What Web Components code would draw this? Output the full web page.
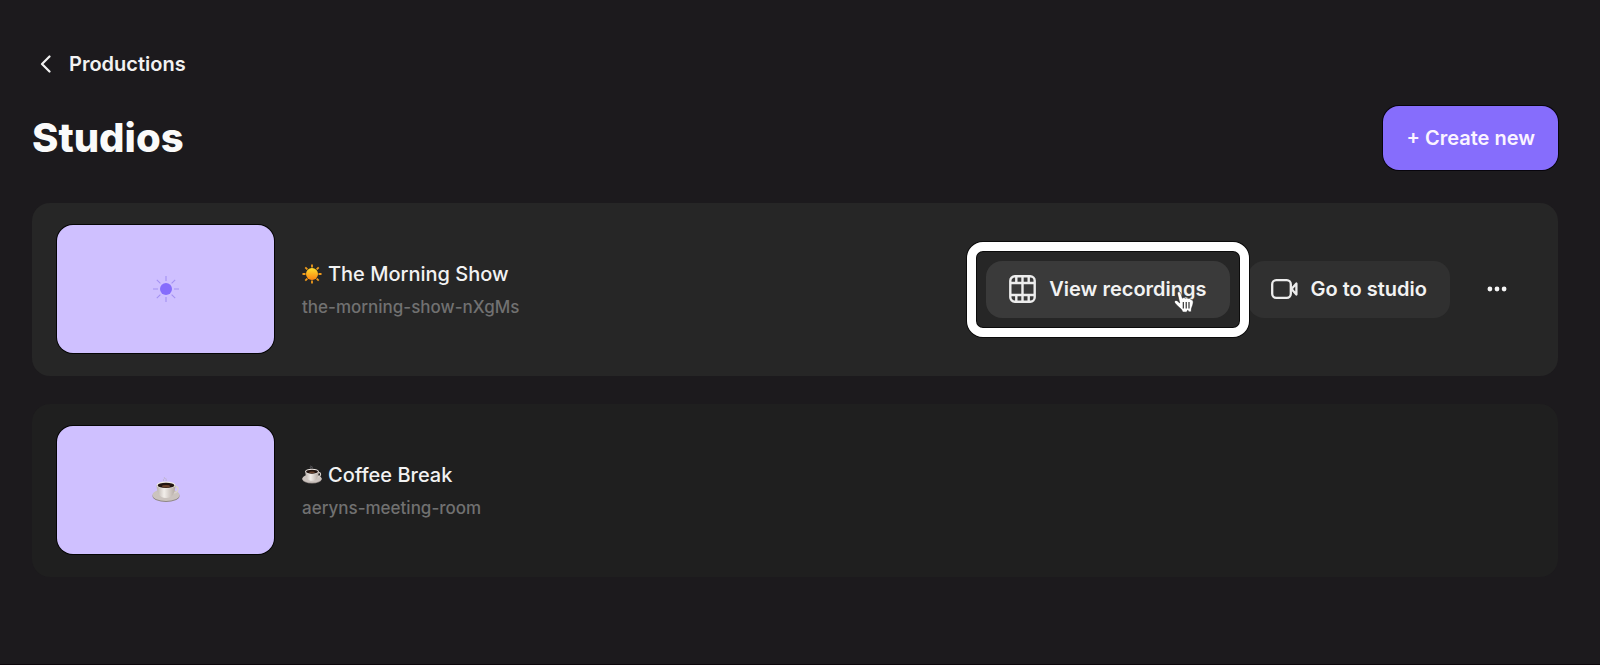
<!DOCTYPE html>
<html lang="en">
<head>
<meta charset="utf-8">
<meta name="viewport" content="width=device-width, initial-scale=1">
<title>Studios</title>
<style>
  html { background: #1c1a1d; }
  body { margin: 0; font-family: Inter, "Liberation Sans", sans-serif; font-size: 20px; line-height: 24px; color: #f2f2f2; min-height: 100vh; box-sizing: border-box; border-bottom: 1px solid #0c060b; }
</style>
</head>
<body>
<studio-page></studio-page>
<script>
const icons = {
  back: `<svg width="11" height="18" viewBox="0 0 11 18"><path d="M9.500 1.500 2 9l7.500 7.500" fill="none" stroke="#f2f2f2" stroke-width="2.200" stroke-linecap="round" stroke-linejoin="round"/></svg>`,
  film: `<svg width="27" height="28" viewBox="0 0 27 28"><g fill="none" stroke="#ededed" stroke-width="2.400"><rect x="1.300" y="1.300" width="24.400" height="25.400" rx="4.500"/><path d="M1.500 8h24M1.500 20h24M13.500 8v12"/><path d="M7.300 1.500V8M13.500 1.500V8M19.700 1.500V8M7.300 20v6.500M13.500 20v6.500M19.700 20v6.500"/></g></svg>`,
  video: `<svg width="27" height="20" viewBox="0 0 27 20"><g fill="none" stroke="#ededed" stroke-width="2.300" stroke-linejoin="round"><rect x="1.200" y="1.200" width="18.600" height="17.600" rx="4"/><path d="M20.500 9.900 25.400 4.500v11z"/></g></svg>`,
  dots: `<svg width="20" height="6" viewBox="0 0 20 6" fill="#f5f5f5"><circle cx="2.900" cy="3" r="2.400"/><circle cx="10" cy="3" r="2.400"/><circle cx="17.100" cy="3" r="2.400"/></svg>`,
  hand: `<svg width="20" height="22" viewBox="0 0 20 22"><path d="M4.300.8C5.600.3 6.400 1.200 6.800 2.300L8.500 7.200C9 6.400 10.600 6.300 11.200 7.300 12 6.500 13.500 6.600 14 7.700 15 7 16.600 7.500 17.200 8.700 19.400 8.600 19.500 10.800 19 13c-.5 2.600-1.800 3.600-1.700 7.800l-2.300.1-1.200-1.600-1.300 1.900-4-.1C8.300 17.500 2.700 15.500.5 11.300c-.4-1.800 1.600-2.500 3-1.300l2.200 1.900L3.500 3.100C3.200 2 3.400 1.200 4.300.8z" fill="#fff" stroke="#222" stroke-width=".6"/><path d="M9.300 11v6.500M12.200 11v6.500M15 11v6.500" fill="none" stroke="#222" stroke-width="1.100"/></svg>`,
  sunFlat: `<svg width="28" height="28" viewBox="0 0 28 28"><circle cx="14" cy="14" r="6" fill="#866dfc"/><path d="M14 1v5M14 22v5M1 14h5M22 14h5M4.800 4.800 8.400 8.400M19.600 19.600l3.600 3.600M4.800 23.200l3.600-3.600M19.600 8.400l3.600-3.600" stroke="#a491f2" stroke-width="1.100"/></svg>`,
  sun: `<svg width="20" height="20" viewBox="0 0 20 20"><defs><linearGradient id="s" x2="0" y2="1"><stop stop-color="#ffdf2e"/><stop offset="1" stop-color="#fb8210"/></linearGradient></defs><path d="M10 .5v3M10 16.500v3M.5 10h3M16.500 10h3M3.300 3.300l2 2M14.700 14.700l2 2M3.300 16.700l2-2M14.700 5.300l2-2" stroke="#f09a1b" stroke-width="1.800"/><circle cx="10" cy="10" r="6" fill="url(#s)"/></svg>`,
  cup: `<svg viewBox="0 0 28 28"><defs><linearGradient id="c"><stop stop-color="#b9b1ab"/><stop offset=".4" stop-color="#f2eeea"/><stop offset="1" stop-color="#b2a7a0"/></linearGradient></defs><path d="M12 5c-2-2 2-2 0-4M14 5c1-2-1-2 0-3" fill="none" stroke="#b4adb8" stroke-width="1" opacity=".6"/><ellipse cx="14" cy="20" rx="13.500" ry="6" fill="#8f8683"/><ellipse cx="14" cy="19" rx="13.500" ry="6" fill="#cbc3be"/><path d="M22 11c5-2 6 5-1 6" fill="none" stroke="#d9d2cd" stroke-width="1.600"/><path d="M4.500 9C5 18 8 22 14 22s9-4 9.500-13z" fill="url(#c)"/><ellipse cx="14" cy="9" rx="9.500" ry="3.600" fill="#eee9e5"/><ellipse cx="14" cy="9.400" rx="8.300" ry="2.700" fill="#211410"/><ellipse cx="14" cy="10.300" rx="4" ry="1.200" fill="#69422d"/></svg>`
};
icons.cupFlat = icons.cup.replace('<svg', '<svg width="28" height="28"');
icons.cup = icons.cup.replace('<svg', '<svg width="20" height="20"');

function define(name, css, html) {
  customElements.define(name, class extends HTMLElement {
    constructor() {
      super();
      this.attachShadow({ mode: 'open' });
    }
    connectedCallback() {
      const t = document.createElement('template');
      t.innerHTML = `<style>svg{display:block;flex:none}${css}</style>${html(this)}`;
      this.shadowRoot.replaceChildren(t.content.cloneNode(true));
    }
  });
}

define('ui-icon', ':host{display:block;flex:none}', el => icons[el.getAttribute('name')]);

define('back-link', `
  :host { display: flex; }
  a { display: flex; align-items: center; gap: 18px; padding-left: 8px; color: inherit; text-decoration: none; font-weight: 600; }
`, () => `<a href="#productions"><ui-icon name="back" aria-hidden="true"></ui-icon><slot></slot></a>`);

define('ui-button', `
  :host { display: block; flex: none; }
  button { display: flex; align-items: center; justify-content: center; gap: 13px; height: 57px; padding: 0 23px; border: 0; border-radius: 16px; background: #303030; color: #f2f2f2; font: inherit; font-weight: 600; white-space: nowrap; cursor: pointer; }
  :host([variant=primary]) button { height: 64px; padding: 0 23px; background: #866dfc; color: #fbf4ff; box-shadow: 0 0 0 1px #08050d; }
  :host([variant=hover]) button { background: #3a3a3a; }
  :host([variant=plain]) button { width: 57px; padding: 0; background: none; }
`, el => `<button type="button" ${el.getAttribute('label') ? `aria-label="${el.getAttribute('label')}"` : ''}>${el.hasAttribute('icon') ? `<ui-icon name="${el.getAttribute('icon')}" aria-hidden="true"></ui-icon>` : ''}<slot></slot></button>`);

define('focus-callout', `
  :host { display: block; position: relative; flex: none; z-index: 1; }
  .ring { position: absolute; inset: -19px; box-sizing: border-box; border: 9px solid #fff; border-radius: 16px; box-shadow: 0 0 0 1px #0b0b0b, inset 0 0 0 1px #0b0b0b; pointer-events: none; }
  .hand { position: absolute; right: 36px; bottom: 5px; pointer-events: none; }
`, () => `<slot></slot><div class="ring"></div><ui-icon class="hand" name="hand" aria-hidden="true"></ui-icon>`);

define('studio-card', `
  :host { display: flex; align-items: center; gap: 28px; padding: 22px 33px 23px 25px; border-radius: 18px; background: #1f1f1f; }
  :host([active]) { background: #262626; }
  .thumb { display: grid; place-items: center; flex: none; width: 217px; height: 128px; border-radius: 16px; background: #cfc0ff; box-shadow: 0 0 0 1px #050505; }
  .info { flex: 1; min-width: 0; display: grid; gap: 9px; padding-top: 2px; }
  h2 { display: flex; align-items: center; gap: 6px; margin: 0; font-size: 20px; font-weight: 500; }
  p { margin: 0; font-size: 17px; font-weight: 500; color: #717171; }
  .actions { display: flex; align-items: center; gap: 18px; }
`, el => `<div class="thumb"><ui-icon name="${el.getAttribute('icon')}Flat" aria-hidden="true"></ui-icon></div>
  <div class="info"><h2><ui-icon name="${el.getAttribute('icon')}" aria-hidden="true"></ui-icon><slot name="title"></slot></h2><p><slot name="slug"></slot></p></div>
  <div class="actions"><slot></slot></div>`);

define('studio-page', `
  :host { display: block; padding: 52px 42px 0 32px; }
  header { display: flex; align-items: center; justify-content: space-between; margin: 30px 0 33px; }
  h1 { margin: 0; font-size: 40px; line-height: 48px; font-weight: 800; color: #fafafa; }
  .list { display: grid; gap: 28px; }
`, () => `<nav><back-link>Productions</back-link></nav>
  <main>
    <header><h1>Studios</h1><ui-button variant="primary">+ Create new</ui-button></header>
    <div class="list">
      <studio-card active icon="sun">
        <span slot="title">The Morning Show</span><span slot="slug">the-morning-show-nXgMs</span>
        <focus-callout><ui-button variant="hover" icon="film">View recordings</ui-button></focus-callout>
        <ui-button icon="video">Go to studio</ui-button>
        <ui-button variant="plain" icon="dots" label="More options"></ui-button>
      </studio-card>
      <studio-card icon="cup">
        <span slot="title">Coffee Break</span><span slot="slug">aeryns-meeting-room</span>
      </studio-card>
    </div>
  </main>`);
</script>
</body>
</html>
